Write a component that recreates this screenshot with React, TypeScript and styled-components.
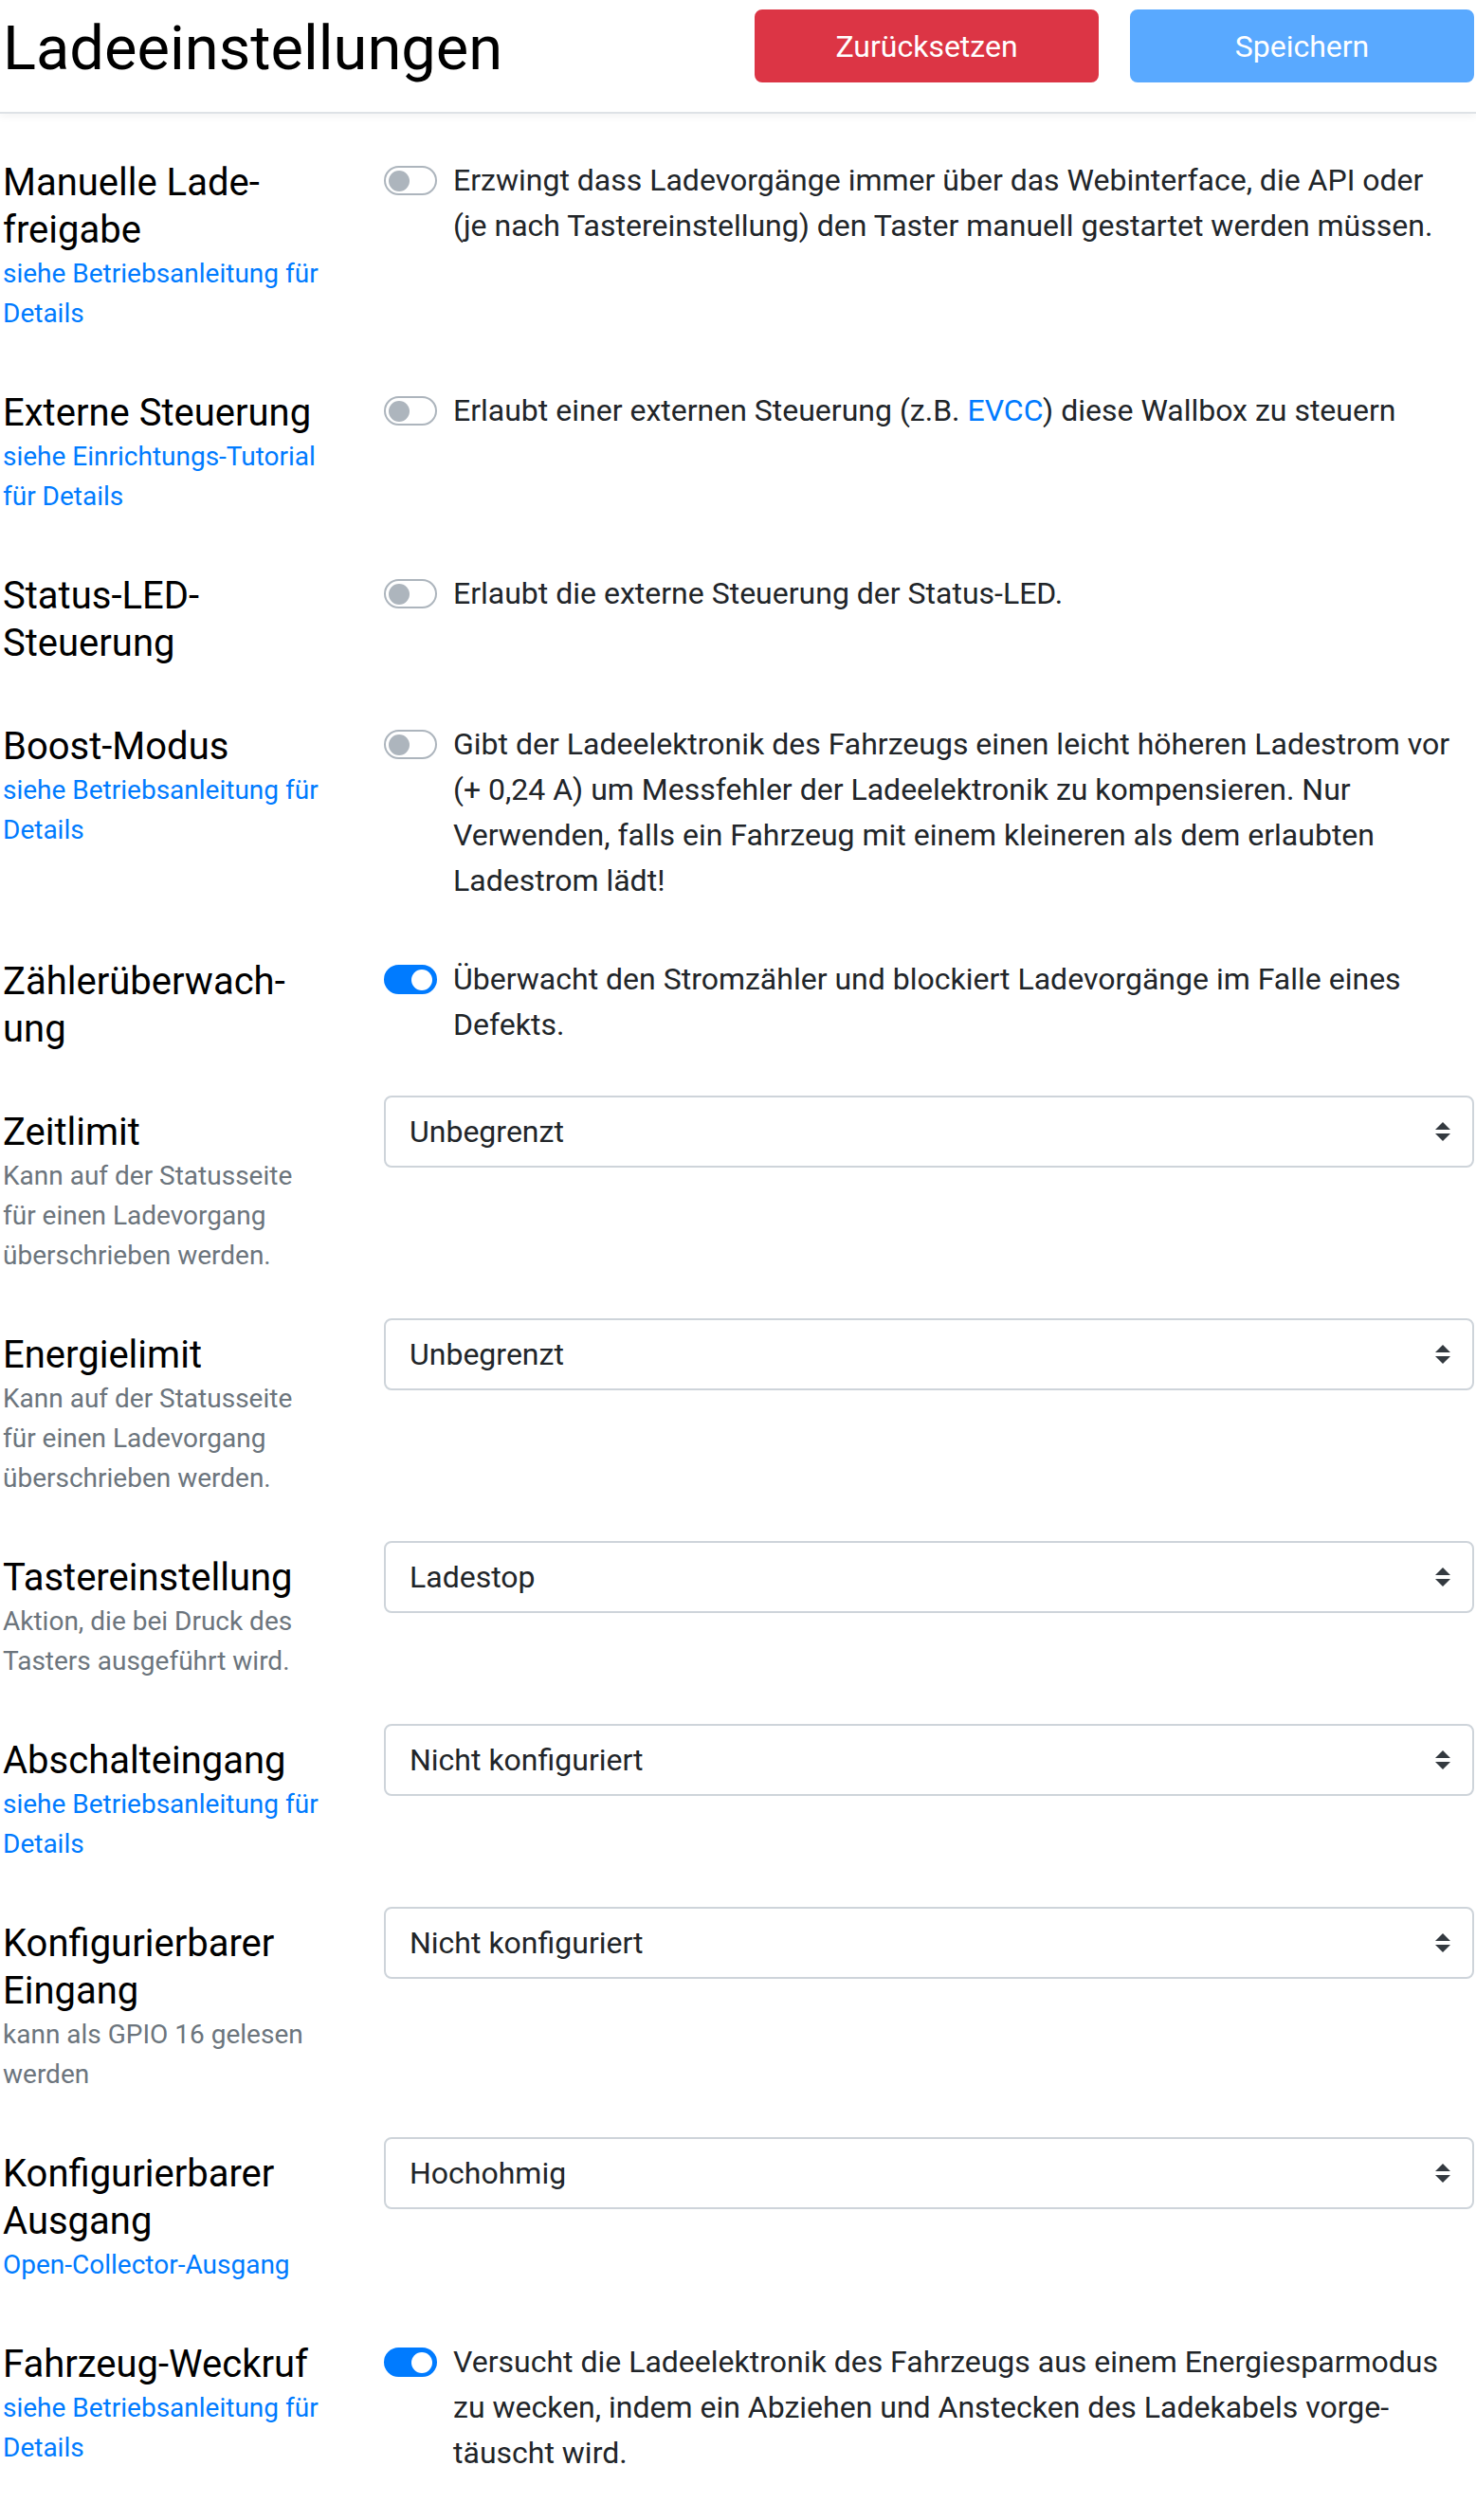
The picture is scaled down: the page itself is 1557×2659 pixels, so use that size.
import React from "react";
import styled, { createGlobalStyle } from "styled-components";

const GlobalStyle = createGlobalStyle`
  *, *::before, *::after { box-sizing: border-box; }
  html, body { margin: 0; padding: 0; background: #fff; }
  body {
    font-family: Roboto, "Liberation Sans", Arial, sans-serif;
    color: #212529;
    font-size: 32px;
    line-height: 1.5;
  }
`;

const Page = styled.div`
  width: 1557px;
  padding-right: 2px;
`;

const Header = styled.header`
  display: flex;
  align-items: flex-start;
  justify-content: space-between;
  height: 120px;
  padding: 10px 2px 0 3px;
  margin-right: -2px;
  background: #fff;
  border-bottom: 2px solid #dee2e6;
  box-shadow: 0 4px 8px rgba(0, 0, 0, 0.04);
`;

const Title = styled.h1`
  margin: 3px 0 0;
  font-size: 65px;
  font-weight: 400;
  line-height: 77px;
  color: #000;
`;

const Actions = styled.div`
  display: flex;
  gap: 33px;
`;

const Button = styled.button<{ $variant: "danger" | "primary" }>`
  width: 363px;
  height: 77px;
  border: 2px solid ${(p) => (p.$variant === "danger" ? "#dc3545" : "#59a9ff")};
  border-radius: 8px;
  background: ${(p) => (p.$variant === "danger" ? "#dc3545" : "#59a9ff")};
  color: #fff;
  font-family: inherit;
  font-size: 32px;
  line-height: 48px;
  padding: 12px 24px;
`;

const Form = styled.main`
  padding-top: 34px;
`;

const Row = styled.section`
  display: grid;
  grid-template-columns: 405px 1fr;
  margin-bottom: 32px;
`;

const LabelCol = styled.div`
  padding: 14px 0 13px 3px;
  max-width: 339px;
`;

const LabelText = styled.div`
  font-size: 40px;
  line-height: 50px;
  color: #000;
`;

const Hint = styled.div<{ $link?: boolean }>`
  font-size: 28px;
  line-height: 42px;
  color: ${(p) => (p.$link ? "#007bff" : "#6c757d")};
`;

const Link = styled.a`
  color: #007bff;
  text-decoration: none;
`;

const SwitchLine = styled.label`
  display: flex;
  align-items: flex-start;
  padding: 12px 15px 12px 0;
`;

const Track = styled.span<{ $on: boolean }>`
  position: relative;
  flex-shrink: 0;
  width: 56px;
  height: 31px;
  margin-top: 9px;
  border-radius: 16px;
  border: 2px solid ${(p) => (p.$on ? "#007bff" : "#adb5bd")};
  background: ${(p) => (p.$on ? "#007bff" : "#fff")};
`;

const Knob = styled.span<{ $on: boolean }>`
  position: absolute;
  top: 2.5px;
  left: ${(p) => (p.$on ? "27px" : "3px")};
  width: 22px;
  height: 22px;
  border-radius: 50%;
  background: ${(p) => (p.$on ? "#fff" : "#adb5bd")};
`;

const Description = styled.span`
  margin-left: 17px;
  font-size: 32px;
  line-height: 48px;
  color: #212529;
`;

const SelectWrap = styled.div`
  position: relative;
  width: 100%;
`;

const Select = styled.select`
  appearance: none;
  -webkit-appearance: none;
  display: block;
  width: 100%;
  height: 76px;
  padding: 0 60px 0 25px;
  border: 2px solid #ced4da;
  border-radius: 8px;
  background: #fff;
  font-family: inherit;
  font-size: 32px;
  color: #212529;
`;

const Arrow = styled.svg`
  position: absolute;
  right: 25px;
  top: 28px;
  width: 16px;
  height: 20px;
  pointer-events: none;
`;

type Row_ =
  | {
      label: string;
      hint?: React.ReactNode;
      link?: boolean;
      kind: "switch";
      on: boolean;
      text: React.ReactNode;
    }
  | {
      label: string;
      hint?: React.ReactNode;
      link?: boolean;
      kind: "select";
      value: string;
    };

const manual = "siehe Betriebsanleitung für Details";
const override = "Kann auf der Statusseite für einen Ladevorgang überschrieben werden.";

const rows: Row_[] = [
  {
    label: "Manuelle Lade\u00ADfreigabe",
    hint: manual,
    link: true,
    kind: "switch",
    on: false,
    text: "Erzwingt dass Ladevorgänge immer über das Webinterface, die API oder (je nach Tastereinstellung) den Taster manuell gestartet werden müssen.",
  },
  {
    label: "Externe Steuerung",
    hint: "siehe Einrichtungs-Tutorial für Details",
    link: true,
    kind: "switch",
    on: false,
    text: (
      <>
        Erlaubt einer externen Steuerung (z.B. <Link href="#">EVCC</Link>) diese Wallbox zu steuern
      </>
    ),
  },
  {
    label: "Status-LED-Steuerung",
    kind: "switch",
    on: false,
    text: "Erlaubt die externe Steuerung der Status-LED.",
  },
  {
    label: "Boost-Modus",
    hint: manual,
    link: true,
    kind: "switch",
    on: false,
    text: "Gibt der Ladeelektronik des Fahrzeugs einen leicht höheren Ladestrom vor (+ 0,24 A) um Messfehler der Ladeelektronik zu kompensieren. Nur Verwenden, falls ein Fahrzeug mit einem kleineren als dem erlaubten Ladestrom lädt!",
  },
  {
    label: "Zählerüberwach\u00ADung",
    kind: "switch",
    on: true,
    text: "Überwacht den Stromzähler und blockiert Ladevorgänge im Falle eines Defekts.",
  },
  { label: "Zeitlimit", hint: override, kind: "select", value: "Unbegrenzt" },
  { label: "Energielimit", hint: override, kind: "select", value: "Unbegrenzt" },
  {
    label: "Tastereinstellung",
    hint: "Aktion, die bei Druck des Tasters ausgeführt wird.",
    kind: "select",
    value: "Ladestop",
  },
  { label: "Abschalteingang", hint: manual, link: true, kind: "select", value: "Nicht konfiguriert" },
  {
    label: "Konfigurierbarer Eingang",
    hint: "kann als GPIO 16 gelesen werden",
    kind: "select",
    value: "Nicht konfiguriert",
  },
  {
    label: "Konfigurierbarer Ausgang",
    hint: "Open-Collector-Ausgang",
    link: true,
    kind: "select",
    value: "Hochohmig",
  },
  {
    label: "Fahrzeug-Weckruf",
    hint: manual,
    link: true,
    kind: "switch",
    on: true,
    text: "Versucht die Ladeelektronik des Fahrzeugs aus einem Energiesparmodus zu wecken, indem ein Abziehen und Anstecken des Ladekabels vorge\u00ADtäuscht wird.",
  },
];

export default function App() {
  return (
    <Page lang="de">
      <GlobalStyle />
      <Header>
        <Title>Ladeeinstellungen</Title>
        <Actions>
          <Button $variant="danger">Zurücksetzen</Button>
          <Button $variant="primary" disabled>
            Speichern
          </Button>
        </Actions>
      </Header>
      <Form>
        {rows.map((r, i) => (
          <Row key={i}>
            <LabelCol>
              <LabelText>{r.label}</LabelText>
              {r.hint && <Hint $link={r.link}>{r.hint}</Hint>}
            </LabelCol>
            {r.kind === "switch" ? (
              <SwitchLine>
                <Track $on={r.on}>
                  <Knob $on={r.on} />
                </Track>
                <Description>{r.text}</Description>
              </SwitchLine>
            ) : (
              <SelectWrap>
                <Select defaultValue={r.value}>
                  <option>{r.value}</option>
                </Select>
                <Arrow viewBox="0 0 4 5">
                  <path fill="#343a40" d="M2 0L0 2h4zm0 5L0 3h4z" />
                </Arrow>
              </SelectWrap>
            )}
          </Row>
        ))}
      </Form>
    </Page>
  );
}
